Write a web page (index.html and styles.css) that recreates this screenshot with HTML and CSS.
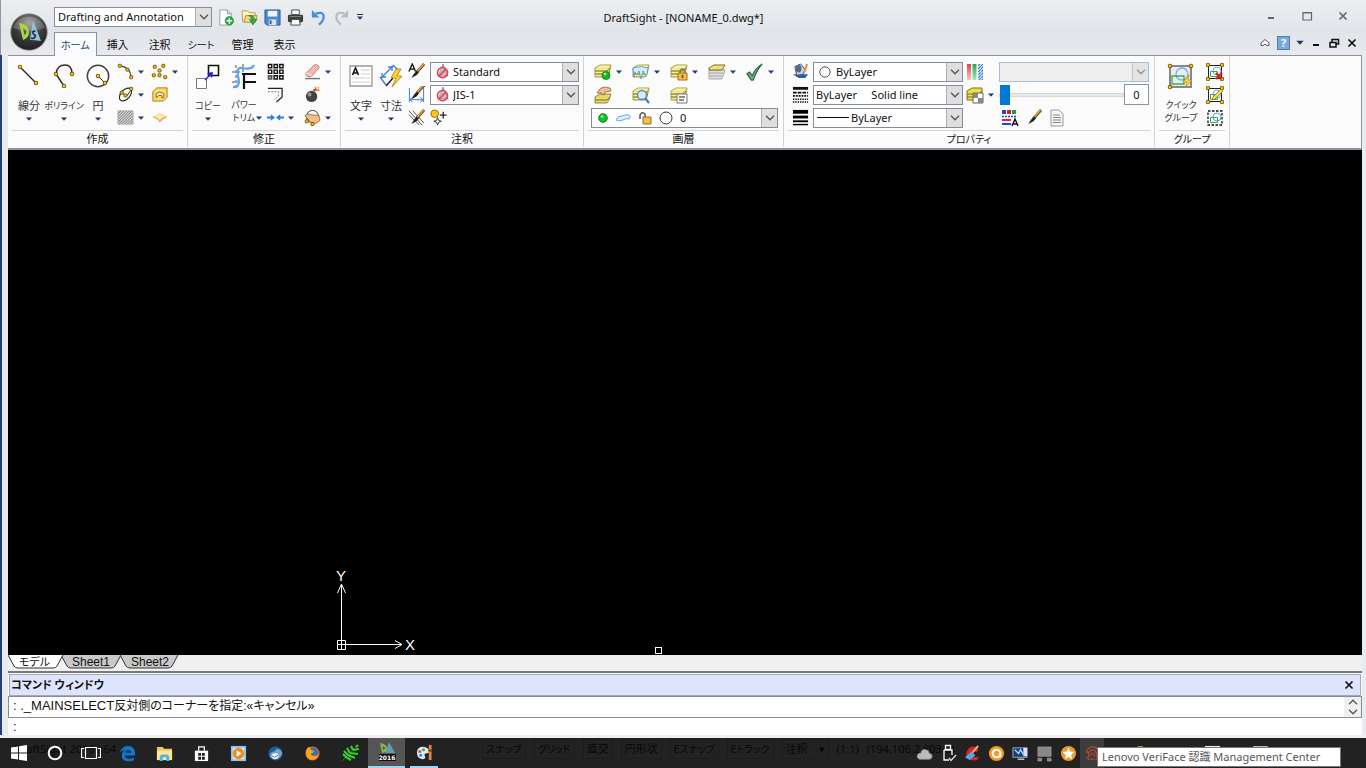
FILE: index.html
```html
<!DOCTYPE html>
<html lang="ja">
<head>
<meta charset="utf-8">
<title>DraftSight - [NONAME_0.dwg*]</title>
<link rel="stylesheet" href="styles.css">
</head>
<body>
<svg class="sprite" aria-hidden="true">
  <defs>
    <radialGradient id="gLogo" cx=".5" cy=".25" r=".8"><stop offset="0" stop-color="#8d8d8d"/><stop offset=".5" stop-color="#3c3c3c"/><stop offset="1" stop-color="#1c1c1c"/></radialGradient>
    <linearGradient id="gRed" x2="0" y2="1"><stop offset="0" stop-color="#e84040"/><stop offset="1" stop-color="#ffc9c0"/></linearGradient>
    <linearGradient id="gGreen" x2="0" y2="1"><stop offset="0" stop-color="#25a55a"/><stop offset="1" stop-color="#a8e6bd"/></linearGradient>
    <pattern id="hatch" width="3" height="3" patternUnits="userSpaceOnUse"><path d="M0 3L3 0M-1 1L1-1M2 4L4 2" stroke="#222" stroke-width=".8"/></pattern>
    <pattern id="hatchB" width="3" height="3" patternUnits="userSpaceOnUse"><rect width="3" height="3" fill="#d8e9fb"/><path d="M0 3L3 0" stroke="#3f7fcc" stroke-width="1.2"/></pattern>
    <g id="pt"><rect x="-1.6" y="-1.6" width="3.2" height="3.2" rx=".8" fill="#ffc800" stroke="#5d4300" stroke-width=".9"/></g>
    <g id="stack"><path d="M1 5l5-3h11l-2 9-2 3H1z" fill="#e3d964" stroke="#8a8440" stroke-width=".8"/><path d="M1.500 5.500L6 2.500h10.500l-3 3z" fill="#f8f2a0"/><path d="M1 8h12l3-3M1 11h12l3-3" fill="none" stroke="#77722c" stroke-width=".9"/><path d="M1.500 6.500h11.500M1.500 9.500h11.500M1.500 12.500h11.500" stroke="#faf6b4" stroke-width=".8"/></g>
    <g id="brush"><path d="M17 1L9 10" stroke="#6b4312" stroke-width="3"/><path d="M16.500 1L9 9.500" stroke="#e0a64e" stroke-width="1.600"/><path d="M9.500 8l-3 3-3 5 5.500-3 2.500-3z" fill="#222"/></g>
    <g id="noentry"><path d="M4 12L8.500 1 13 12z" fill="#9fc1e2" stroke="#6689ad" stroke-width=".8"/><circle cx="8" cy="9" r="4.800" fill="#f7c0c0" fill-opacity=".35" stroke="#e8434c" stroke-width="1.500"/><path d="M4.800 12.200l6.400-6.400" stroke="#e8434c" stroke-width="1.500"/></g>
  </defs>
  <symbol id="i-arrow" viewBox="0 0 6 4"><path d="M0 .5h6L3 3.800z" fill="#1f3d68"/></symbol>
  <symbol id="i-chev" viewBox="0 0 10 6"><path d="M1 .8l4 4 4-4" fill="none" stroke="#555" stroke-width="1.300"/></symbol>
  <symbol id="i-logo" viewBox="0 0 38 38"><circle cx="19" cy="19" r="18.300" fill="url(#gLogo)" stroke="#999" stroke-width=".8"/><path d="M3 15a16.500 15 0 0 1 32 0q-16 6-32 0z" fill="#fff" opacity=".2"/><path fill-rule="evenodd" d="M9 10q10 1 10 9 0 6-6 8zm4 5l1.500 7q2-1 2-3 0-3-3.500-4z" fill="#a8d63c"/><path d="M23 7l8 21q-7-1-11-1z" fill="#8fc4da"/><path d="M25.500 18q-4.500 0-2 3 3.500 2 .5 4-1.500 1-3 0" fill="none" stroke="#22343d" stroke-width="1.700"/></symbol>
  <symbol id="i-new" viewBox="0 0 18 18"><path d="M2 1h8l4 4v12H2z" fill="#fff" stroke="#9a9a9a"/><path d="M10 1v4h4" fill="#ddd" stroke="#9a9a9a"/><circle cx="12" cy="12.500" r="4.500" fill="#27a844" stroke="#128030" stroke-width=".6"/><path d="M12 9.500v6M9 12.500h6" stroke="#fff" stroke-width="1.500"/></symbol>
  <symbol id="i-open" viewBox="0 0 18 18"><path d="M2 14L1 2h6l2 2h6v4" fill="#fff1bb" stroke="#b99a4c"/><path d="M3 14l2-7h12l-2 7z" fill="#f5d88c" stroke="#b38c34"/><path d="M8 7q6-1 6 4h3l-4.500 6L9 11h2q0-3-3-4z" fill="#35aa40" stroke="#137422" stroke-width=".6"/></symbol>
  <symbol id="i-save" viewBox="0 0 18 18"><path d="M1 1h16v16H3l-2-2z" fill="#4b88ce" stroke="#2b5b9c"/><path d="M4 2h10v6H4z" fill="#eaf5ff"/><path d="M5 11h8v6H5z" fill="#d9e1ea"/><path d="M6 12h2v4H6z" fill="#315e9b"/></symbol>
  <symbol id="i-print" viewBox="0 0 18 18"><path d="M5 1h8v5H5z" fill="#fff" stroke="#444"/><rect x="1" y="6" width="16" height="8" rx="1.500" fill="#3c3c3c"/><path d="M3 8h12" stroke="#888"/><path d="M5 11h8l1 6H4z" fill="#fff" stroke="#444"/></symbol>
  <symbol id="i-undo" viewBox="0 0 18 18"><path d="M6 5q8-3 8.500 3 0 5-5 8.500" fill="none" stroke="#4a8be0" stroke-width="2.400"/><path d="M2 1v8h8z" fill="#4a8be0"/></symbol>
  <symbol id="i-redo" viewBox="0 0 18 18"><path d="M12 5q-8-3-8.500 3 0 5 5 8.500" fill="none" stroke="#b9bbbe" stroke-width="2.200"/><path d="M16 1v8H8z" fill="#b9bbbe"/></symbol>
  <symbol id="i-line" viewBox="0 0 28 28"><path d="M6 6l16 16" stroke="#222" stroke-width="1.300"/><use href="#pt" x="5" y="5"/><use href="#pt" x="21" y="21"/></symbol>
  <symbol id="i-poly" viewBox="0 0 28 28"><path d="M14 24L6 12q1-9 9-9 7 0 7 9" fill="none" stroke="#333" stroke-width="1.500"/><use href="#pt" x="6" y="12"/><use href="#pt" x="14" y="24"/><use href="#pt" x="22" y="12"/></symbol>
  <symbol id="i-circle" viewBox="0 0 28 28"><circle cx="14" cy="14" r="10.700" fill="#fff" stroke="#444" stroke-width="1.500"/><path d="M14 14l7 7" stroke="#222"/><use href="#pt" x="14" y="14"/><use href="#pt" x="21" y="21"/></symbol>
  <symbol id="i-arc" viewBox="0 0 18 18"><path d="M3 3q11 1 12 12" fill="none" stroke="#444" stroke-width="1.200"/><use href="#pt" x="3" y="3"/><use href="#pt" x="11" y="7"/><use href="#pt" x="15" y="15"/></symbol>
  <symbol id="i-pts" viewBox="0 0 18 18"><use href="#pt" x="4" y="4"/><use href="#pt" x="13" y="3"/><use href="#pt" x="9" y="8"/><use href="#pt" x="3" y="13"/><use href="#pt" x="9" y="13"/><use href="#pt" x="15" y="15"/></symbol>
  <symbol id="i-ell" viewBox="0 0 18 18"><ellipse cx="9" cy="9" rx="8" ry="4.800" transform="rotate(-48 9 9)" fill="#fff" stroke="#222" stroke-width="1.200"/><path d="M5 7l5 4 5-7" stroke="#222" fill="none"/><use href="#pt" x="5" y="7"/><use href="#pt" x="9" y="10"/><use href="#pt" x="15" y="3"/></symbol>
  <symbol id="i-region" viewBox="0 0 18 18"><path d="M6 2h11v10l-4 4H2V6z" fill="#ffd867" stroke="#a5781c"/><path d="M5.500 12.500V8q3-3 8 0v4.500h-2V10H8z" fill="#fff9d7" stroke="#86621a"/></symbol>
  <symbol id="i-hatch" viewBox="0 0 18 18"><path d="M1 2h16v14H1z" fill="#e8e8e8"/><path d="M1 2h16v14H1z" fill="url(#hatch)" stroke="#aaa"/></symbol>
  <symbol id="i-mask" viewBox="0 0 18 18"><path d="M2 9q5 0 7-4 3 3 8 4-4 1-8 5-2-4-7-5z" fill="#e0ac48"/><path d="M2 8q5 0 7-3 3 2 8 3-5 1-8 4-2-3-7-4z" fill="#ffebae" stroke="#ddb04d" stroke-width=".5"/></symbol>
  <symbol id="i-copy" viewBox="0 0 28 28"><path d="M14.500 3.500h10v10h-10z" fill="#fff" stroke="#111" stroke-width="1.600"/><path d="M2.500 16.500h10v10h-10z" fill="#fff" stroke="#777"/><path d="M11 18l5-5" stroke="#2020e8" stroke-width="1.400"/><path d="M19 10l-6 1 5 5z" fill="#2020e8"/></symbol>
  <symbol id="i-trim" viewBox="0 0 28 28"><path d="M2 10h10M2 20h10M13 2v9M6 3v23" stroke="#888" stroke-dasharray="3 2" stroke-width="1.500"/><path d="M14 27V12M12 12h14M14 20h12" fill="none" stroke="#111" stroke-width="2.200"/><path d="M3 25q8 1 5-11-2-9 4-8 10 2 12-3" fill="none" stroke="#5ba3ea" stroke-width="2.200"/></symbol>
  <symbol id="i-grid" viewBox="0 0 18 18"><g fill="#fff" stroke="#111" stroke-width="1.500"><path d="M1.500 1.500h3.500v3.500H1.500zM7.500 1.500H11v3.500H7.500zM13.500 1.500H17v3.500h-3.500zM1.500 7.500H5V11H1.500zM7.500 7.500H11V11H7.500zM13.500 7.500H17V11h-3.500zM7.500 13.500H11V17H7.500zM13.500 13.500H17V17h-3.500z"/><path d="M1.500 13.500H5V17H1.500z" fill="#999" stroke="#555"/></g></symbol>
  <symbol id="i-fillet" viewBox="0 0 18 18"><path d="M1 2.500h15v9L10 17" fill="none" stroke="#222" stroke-width="1.300"/><path d="M1 6h11v5l-5 4" fill="none" stroke="#777" stroke-dasharray="2 1.500"/></symbol>
  <symbol id="i-join" viewBox="0 0 18 18"><path d="M0 9h5M18 9h-5" stroke="#2b7de0" stroke-width="2"/><path d="M4 5.500L8.500 9 4 12.500zM14 5.500L9.500 9l4.500 3.500z" fill="#2b7de0"/></symbol>
  <symbol id="i-erase" viewBox="0 0 18 18"><path d="M1 16.500h16" stroke="#777" stroke-width="1.500"/><path d="M2 11L11 2q4-1 5 3l-8 9q-6 2-6-3z" fill="#f4b8b0" stroke="#b5776f"/><path d="M2 11q4-1 6 3" fill="none" stroke="#fff"/></symbol>
  <symbol id="i-bomb" viewBox="0 0 18 18"><circle cx="8" cy="11" r="6" fill="#424242"/><circle cx="6" cy="9" r="2" fill="#999"/><path d="M10 5l3-2" stroke="#555" stroke-width="2"/><path d="M12 0l1.500 2L16 1l-1 2 2 2-3 0-2 1z" fill="#ff5b22"/><circle cx="14" cy="3" r="1.200" fill="#ffe74a"/></symbol>
  <symbol id="i-edit" viewBox="0 0 18 18"><circle cx="9" cy="8" r="6.500" fill="none" stroke="#333"/><path d="M1 7q3-3 6-1l9 1 1 5-4 3H8l-3-3z" fill="#eebf87" stroke="#8b5929" stroke-width=".8"/><use href="#pt" x="3" y="13"/><use href="#pt" x="9" y="16"/></symbol>
  <symbol id="i-text" viewBox="0 0 28 28"><path d="M3 4h22v20H3z" fill="#fff" stroke="#999" stroke-width="1.300"/><path d="M14 8h9M14 12h9M5 16h18M5 20h18" stroke="#ccc"/><path d="M5.500 13l3-7 3 7M6.500 11h4" fill="none" stroke="#111" stroke-width="1.600"/></symbol>
  <symbol id="i-dim" viewBox="0 0 28 28"><path d="M4 16L16 4M3 15l6 8M16 3l6 6" stroke="#3b78dc" stroke-width="1.300"/><path d="M5 15v-4M5 15h4M15 5h-4M15 5v4" stroke="#3b78dc" stroke-width="1.300"/><path d="M9 24l7-8" stroke="#222" stroke-width="1.500"/><path d="M19 7l-5 9h5l-4 9 10-11h-5l4-7z" fill="#ffcf33" stroke="#aa7b0d" stroke-width=".8"/></symbol>
  <symbol id="i-tstyle" viewBox="0 0 18 18"><path d="M1 9l3.500-8L8 9M2.500 6.500h4" fill="none" stroke="#111" stroke-width="1.400"/><use href="#brush"/></symbol>
  <symbol id="i-dstyle" viewBox="0 0 18 18"><path d="M1.500 2v15M16.500 2v15M2 14.500h14M5 12l-3 2.500L5 17M13 12l3 2.500-3 2.500" fill="none" stroke="#3b78dc"/><use href="#brush" y="-2"/></symbol>
  <symbol id="i-cstyle" viewBox="0 0 18 18"><path d="M1 2l14 15M1 6l11 11M5 2l12 13" stroke="#333" stroke-width=".9"/><use href="#brush"/></symbol>
  <symbol id="i-center" viewBox="0 0 18 18"><circle cx="5" cy="5" r="4" fill="#ffc420" stroke="#9d6d00"/><path d="M14 3v7M10.500 6.500h7" stroke="#222" stroke-width="1.300"/><path d="M8 9l1 3 3 1-3 1-1 3-1-3-3-1 3-1z" fill="#fff" stroke="#333"/></symbol>
  <symbol id="i-noentry" viewBox="0 0 16 16"><use href="#noentry"/></symbol>
  <symbol id="i-lay1" viewBox="0 0 18 18"><use href="#stack"/><circle cx="12" cy="12.500" r="4" fill="#17b52a" stroke="#067815" stroke-width=".8"/><circle cx="11" cy="11" r="1.300" fill="#9dff9f"/></symbol>
  <symbol id="i-lay2" viewBox="0 0 18 18"><use href="#stack"/><path d="M1 5q8-3 15 0l-1 6q-1 5-2 0l-2-3-2 8-2-8-2 4-2-3-1 5z" fill="#d4edfc" stroke="#4b93c8" stroke-width=".8"/></symbol>
  <symbol id="i-lay3" viewBox="0 0 18 18"><use href="#stack"/><path d="M10 10V8q2.500-4 5 0v2" fill="none" stroke="#777" stroke-width="1.600"/><path d="M8 10h9v7H8z" fill="#f5bd43" stroke="#9e7312"/><path d="M12.500 12v3" stroke="#654300" stroke-width="1.500"/></symbol>
  <symbol id="i-lay4" viewBox="0 0 18 18"><path d="M1 7h16l-3 9H1z" fill="#dedede" stroke="#aaa"/><path d="M1 10h14M1 13h13" stroke="#aaa"/><path d="M1 5l5-3h11l-3 5H1z" fill="#eee27a" stroke="#77722c"/></symbol>
  <symbol id="i-check" viewBox="0 0 20 20"><path d="M1 12l3-2 3 4q3-8 11-13Q12 8 8 19H6z" fill="#63b77d" stroke="#2e5d3e" stroke-width="1.200"/></symbol>
  <symbol id="i-lay5" viewBox="0 0 18 18"><path d="M1 11l5-3h11l-2 6-2 3H1z" fill="#e3d964" stroke="#77722c" stroke-width=".8"/><path d="M1 14h12l3-3" fill="none" stroke="#77722c"/><path d="M3 7q3-6 7-6l6 1 1 3-6 1-1 3q-3-1-3-2z" fill="#edbd94" stroke="#975c35" stroke-width=".8"/></symbol>
  <symbol id="i-lay6" viewBox="0 0 18 18"><use href="#stack"/><circle cx="10" cy="9" r="4.500" fill="#d6ecff" stroke="#5488b8" stroke-width="1.300"/><path d="M13 12l4 5" stroke="#417eb9" stroke-width="2.200"/></symbol>
  <symbol id="i-lay7" viewBox="0 0 18 18"><use href="#stack"/><path d="M7 8h10v9H7z" fill="#fff" stroke="#777"/><path d="M9 11h6M9 14h5" stroke="#666" stroke-width="1.300"/></symbol>
  <symbol id="i-dot" viewBox="0 0 10 10"><circle cx="5" cy="5" r="4.300" fill="#13c425" stroke="#08851a"/><circle cx="4" cy="3.500" r="1.200" fill="#b3ffad"/></symbol>
  <symbol id="i-thaw" viewBox="0 0 16 10"><path d="M1 7q2-5 6-4 3-2 7-1 3 2 0 4-4-1-6 1-5 2-7 0z" fill="#d9effc" stroke="#69a8d8"/></symbol>
  <symbol id="i-unlock" viewBox="0 0 14 14"><path d="M2 8V4q2-4 5-1v4" fill="none" stroke="#555" stroke-width="1.500"/><path d="M5 6h8v7H5z" fill="#f0bf4e" stroke="#98731d"/></symbol>
  <symbol id="i-ring" viewBox="0 0 14 14"><circle cx="7" cy="7" r="6" fill="#fff" stroke="#333"/></symbol>
  <symbol id="i-paint" viewBox="0 0 18 18"><path d="M1 12h16l-3 4H7z" fill="#2361ae"/><path d="M3 4l6-3 5 6-2 5-7 1z" fill="#c9d3de" stroke="#3c4b5d"/><ellipse cx="7" cy="6" rx="3" ry="4" fill="#596a80"/><path d="M16 1l-3 9" stroke="#d78f3d" stroke-width="2"/></symbol>
  <symbol id="i-ltype" viewBox="0 0 18 18"><path d="M1 2.500h16" stroke="#111" stroke-width="3"/><path d="M1 7h16" stroke="#111" stroke-width="2" stroke-dasharray="4 1"/><path d="M1 10.500h16" stroke="#111" stroke-width="2" stroke-dasharray="2 1"/><path d="M1 14h16M1 17h16" stroke="#111" stroke-width="1.500" stroke-dasharray="1.500 1"/></symbol>
  <symbol id="i-lweight" viewBox="0 0 18 18"><path d="M1 3h16" stroke="#000" stroke-width="4"/><path d="M1 8.500h16" stroke="#000" stroke-width="3"/><path d="M1 13h16" stroke="#000" stroke-width="2"/><path d="M1 16.500h16" stroke="#000" stroke-width="1.500"/></symbol>
  <symbol id="i-bars" viewBox="0 0 18 18"><path d="M1 1h4v16H1z" fill="url(#gRed)"/><path d="M6.500 1h4v16h-4z" fill="url(#gGreen)"/><path d="M12 1h5v16h-5z" fill="url(#hatchB)"/></symbol>
  <symbol id="i-trans" viewBox="0 0 18 18"><path d="M1 5l5-3h10v10l-3 2H1z" fill="#f4dd3c" stroke="#77722c"/><path d="M1 8h12l3-3M1 11h10" fill="none" stroke="#77722c"/><path d="M7 7h10v10H7z" fill="#fff" stroke="#666"/><path d="M7 7h5v5H7zM12 12h5v5h-5z" fill="#888"/></symbol>
  <symbol id="i-props" viewBox="0 0 18 18"><path d="M1 1h4v4H1z" fill="#2345d0"/><path d="M6 1h4v4H6z" fill="#cc2030"/><path d="M11 1h4v4h-4z" fill="#2c9747"/><path d="M1 7.500h14" stroke="#2345d0" stroke-width="1.500" stroke-dasharray="2 1"/><path d="M1 11h9" stroke="#dd2838" stroke-width="2"/><path d="M1 15h9" stroke="#2345d0" stroke-width="2"/><path d="M11 17l3-7 3 7M12 15h4" fill="none" stroke="#111" stroke-width="1.400"/></symbol>
  <symbol id="i-brush" viewBox="0 0 18 18"><use href="#brush"/></symbol>
  <symbol id="i-doc" viewBox="0 0 18 18"><path d="M3 1h8l4 4v12H3z" fill="#f5f5f5" stroke="#999"/><path d="M5 6h7M5 8.500h8M5 11h8M5 13.500h8" stroke="#888"/></symbol>
  <symbol id="i-qgroup" viewBox="0 0 28 28"><path d="M3 4h21v21H3z" fill="#ececec" stroke="#888" stroke-width="2"/><circle cx="15" cy="12" r="6" fill="none" stroke="#79abe8" stroke-width="1.300"/><path d="M5 14h12v8H5z" fill="none" stroke="#35ae54" stroke-width="1.300"/><use href="#pt" x="3" y="4"/><use href="#pt" x="24" y="4"/><use href="#pt" x="3" y="25"/><path d="M22 13l-6 7h4l-2 6 7-8h-4z" fill="#ffd23e" stroke="#a87c12" stroke-width=".6"/></symbol>
  <symbol id="i-grp" viewBox="0 0 18 18"><path d="M2.500 2.500h13v13h-13z" fill="none" stroke="#222"/><circle cx="11" cy="8" r="4" fill="none" stroke="#79abe8"/><path d="M4.500 8.500h7v5h-7z" fill="none" stroke="#35ae54"/><use href="#pt" x="2" y="2"/><use href="#pt" x="16" y="2"/><use href="#pt" x="2" y="16"/><use href="#pt" x="16" y="16"/></symbol>
  <symbol id="i-grpx" viewBox="0 0 18 18"><use href="#i-grp" width="18" height="18"/><path d="M10 10l6 6M16 10l-6 6" stroke="#dc1c24" stroke-width="2.200"/></symbol>
  <symbol id="i-grpe" viewBox="0 0 18 18"><use href="#i-grp" width="18" height="18"/><path d="M17 5l-8 8-3 1 1-3 8-8z" fill="#ffd84b" stroke="#9d7415" stroke-width=".8"/></symbol>
  <symbol id="i-grps" viewBox="0 0 18 18"><path d="M2 2h14v14H2z" fill="none" stroke="#111" stroke-width="1.300" stroke-dasharray="2.500 1.500"/><circle cx="11" cy="8" r="4" fill="none" stroke="#5d9be5"/><path d="M4.500 8.500h7v5h-7z" fill="none" stroke="#35ae54"/></symbol>
  <symbol id="i-min" viewBox="0 0 12 12"><path d="M3 8h6" stroke="currentColor" stroke-width="2"/></symbol>
  <symbol id="i-max" viewBox="0 0 12 12"><path d="M2 2.500h8.500v7.500H2zM2 3h8" fill="none" stroke="currentColor" stroke-width="1.200"/></symbol>
  <symbol id="i-x" viewBox="0 0 12 12"><path d="M2.500 2.500l7 7M9.500 2.500l-7 7" stroke="currentColor" stroke-width="1.700"/></symbol>
  <symbol id="i-restore" viewBox="0 0 12 12"><path d="M4 5V2.500h6.500V7H8M2 5.500h6V10H2zM4 2.500h6.500M2 5.500h6" fill="none" stroke="currentColor" stroke-width="1.500"/></symbol>
  <symbol id="i-up" viewBox="0 0 12 12"><path d="M2 6l4-3.500L10 6v2.500H8L6 7 4 8.500H2z" fill="#fff" stroke="#555"/></symbol>
  <symbol id="t-win" viewBox="0 0 18 18"><path d="M1 3.500l7-1v6H1zM9 2.300L17 1v7.500H9zM1 9.500h7v6l-7-1zM9 9.500h8V17l-8-1.200z" fill="#fff"/></symbol>
  <symbol id="t-cort" viewBox="0 0 18 18"><circle cx="9" cy="9" r="6.300" fill="none" stroke="#fff" stroke-width="2"/></symbol>
  <symbol id="t-view" viewBox="0 0 20 18"><path d="M4.500 3.500h11v11h-11zM3 4.500H.5v9H3M17 4.500h2.500v9H17" fill="none" stroke="#fff" stroke-width="1.200"/></symbol>
  <symbol id="t-edge" viewBox="0 0 18 18"><path d="M1 8Q3 1 9.500 1 17 1.500 17 8.500V11H6.500q0 3.500 4.500 3.500 3 0 5-1.300V16q-3 1.500-6.500 1.200Q3 17 3 11q0-4 4-6Q3 5.500 1 8zm5.700.2h6q0-3-3-3-2.500 0-3 3z" fill="#0d78d8"/></symbol>
  <symbol id="t-fold" viewBox="0 0 18 18"><path d="M1 2h6l1.500 2H17v12H1z" fill="#f2c65a"/><path d="M1 6h16v10H1z" fill="#ffe696"/><path d="M4 17v-5l2-2h6l2 2v5h-3v-4H7v4z" fill="#4ab3ea"/></symbol>
  <symbol id="t-store" viewBox="0 0 18 18"><path d="M2 6h14v11H2z" fill="#fff"/><path d="M6 6V2h6v4" fill="none" stroke="#fff" stroke-width="1.300"/><path d="M5.500 8.500h3v3h-3zM9.500 8.500h3v3h-3zM5.500 12.500h3v3h-3zM9.500 12.500h3v3h-3z" fill="#222"/></symbol>
  <symbol id="t-media" viewBox="0 0 18 18"><path d="M1 1h16v16H1z" fill="#8fc5ec"/><path d="M3 3h12v12H3z" fill="#d9efff"/><circle cx="9" cy="9" r="6" fill="#f28a17"/><path d="M7 5.500l5.500 3.500L7 12.500z" fill="#fff"/></symbol>
  <symbol id="t-bird" viewBox="0 0 18 18"><circle cx="9" cy="9" r="7.500" fill="#1e5b9d"/><path d="M3 12q0-5 5-5l2-3q4 0 6 4-1 7-7 7-4 0-6-3z" fill="#6fa5d4"/><path d="M4 11q4-4 9-1-1 5-5 5-3-1-4-4z" fill="#fff"/><path d="M4 11l4 2 5-3" stroke="#566" fill="none"/></symbol>
  <symbol id="t-fox" viewBox="0 0 18 18"><circle cx="9" cy="9" r="7.500" fill="#e9661b"/><circle cx="10" cy="8" r="5" fill="#3472b8"/><path d="M2 7q1-5 4-5 0 3 4 4 1 2-3 3 2 5 8 1-2 6-7 6-6-1-6-9z" fill="#f7a51c"/></symbol>
  <symbol id="t-leaf" viewBox="0 0 18 18"><path d="M1 17L16 2" stroke="#1b7818"/><path d="M5 13l-3-3M7 11L3 7M9 9L6 4M12 6l-2-4M5 13l5 3M7 11l7 3M9 9l8 1M12 6l6-1M15 3l2-2" stroke="#35d02b" stroke-width="2.200"/></symbol>
  <symbol id="t-ds" viewBox="0 0 22 22"><path fill-rule="evenodd" d="M4 2q7 1 7 6 0 3-5 4zm2.500 3l.5 4q2-1 2-2 0-1-2.500-2z" fill="#87b94b"/><path d="M13 1l6 11H9z" fill="#659db0"/><path d="M3 13h17v7H3z" fill="#111"/></symbol>
  <symbol id="t-pal" viewBox="0 0 18 18"><path d="M1 9q0-6 7-6 6 1 6 5 0 2-4 2-2 1 0 4-1 3-4 2-5-1-5-7z" fill="#dceaf4"/><circle cx="4" cy="8" r="1.600" fill="#e54d3c"/><circle cx="8" cy="6" r="1.600" fill="#42ad48"/><circle cx="5" cy="12" r="1.600" fill="#3c86dd"/><path d="M15 1v16" stroke="#dc873a" stroke-width="3"/><path d="M13 7h4" stroke="#6a3914" stroke-width="2"/></symbol>
  <symbol id="t-cloud" viewBox="0 0 18 18"><path d="M4 15q-4-1-2-5 1-2 3-1 1-5 5-4 4 0 4 4 3 0 3 3 0 3-3 3z" fill="#bbb" stroke="#8b8b8b"/></symbol>
  <symbol id="t-usb" viewBox="0 0 18 18"><path d="M6.500 1.500h5v4h-5zM5 6h8v5M5 6v10h5" fill="none" stroke="#fff" stroke-width="1.300"/><path d="M10 14l2 2.500L17 11" fill="none" stroke="#ddd" stroke-width="1.300"/></symbol>
  <symbol id="t-cc" viewBox="0 0 18 18"><path d="M15 4q-4-4-9-1-5 4-3 9 3 6 11 4l2-4q-4 2-6 0-2-2 0-4 2-2 4 0z" fill="#d62921"/><path d="M15 1L9 8" stroke="#e0b27a" stroke-width="2"/><path d="M8 7l4 4-6 5-5-3z" fill="#5aa6e0"/></symbol>
  <symbol id="t-avast" viewBox="0 0 18 18"><circle cx="9" cy="9" r="8" fill="#f59a1e"/><circle cx="9" cy="9" r="4" fill="none" stroke="#fff" stroke-width="2.200"/><path d="M13 7v6" stroke="#fff" stroke-width="2"/></symbol>
  <symbol id="t-mon" viewBox="0 0 18 18"><path d="M1 3h15v10H1z" fill="#173c7c" stroke="#aaa"/><path d="M3 5l4 4 2-4 3 5" stroke="#9cdcff" fill="none" stroke-width="1.500"/><path d="M12 3h4v9h-4z" fill="#cfe4f6"/><path d="M6 15h7" stroke="#ccc" stroke-width="1.500"/></symbol>
  <symbol id="t-sq" viewBox="0 0 18 18"><path d="M2 2h14v10H2zM2 14h4v3H2zM12 14h4v3h-4z" fill="#888" stroke="#aaa" stroke-width=".6"/></symbol>
  <symbol id="t-star" viewBox="0 0 18 18"><circle cx="9" cy="9" r="8" fill="#f39a2c"/><path d="M9 3l1.800 4 4.200.5-3.100 3 .8 4.300L9 12.700l-3.700 2.100.8-4.300-3.100-3 4.200-.5z" fill="#fff"/></symbol>
  <symbol id="t-face" viewBox="0 0 18 18"><path d="M3 9q0-7 6-7t6 7M5 13V8q4-6 8 0v5M8 8l-1 4M10 8l1 4M3 13l3 3M15 13l-3 3M7 15h4" fill="none" stroke="#b8482a" stroke-width="1.300"/></symbol>
  <symbol id="t-balls" viewBox="0 0 18 18"><circle cx="9" cy="7" r="6" fill="#e8d235"/><path d="M3 7q0-6 6-6v6z" fill="#4fa848"/></symbol>
  <symbol id="t-key" viewBox="0 0 18 18"><path d="M1 1h16v6H1z" fill="#eee"/></symbol>
  <symbol id="t-note" viewBox="0 0 18 18"><path d="M2 6V2h14v4" fill="none" stroke="#eee" stroke-width="1.500"/></symbol>
</svg>

<div class="app">
  <header class="head">
    <button class="logo" aria-label="DraftSight"><svg width="38" height="38"><use href="#i-logo"/></svg></button>
    <div class="quick">
      <div class="combo workspace"><select aria-label="ワークスペース"><option>Drafting and Annotation</option></select><span class="drop"><svg class="chev"><use href="#i-chev"/></svg></span></div>
      <button aria-label="新規"><svg class="i16"><use href="#i-new"/></svg></button>
      <button aria-label="開く"><svg class="i16"><use href="#i-open"/></svg></button>
      <button aria-label="保存"><svg class="i16"><use href="#i-save"/></svg></button>
      <button aria-label="印刷"><svg class="i16"><use href="#i-print"/></svg></button>
      <button aria-label="元に戻す"><svg class="i16"><use href="#i-undo"/></svg></button>
      <button aria-label="やり直し"><svg class="i16"><use href="#i-redo"/></svg></button>
      <button class="more" aria-label="カスタマイズ"><svg class="arr"><use href="#i-arrow"/></svg></button>
    </div>
    <h1 class="title">DraftSight - [NONAME_0.dwg*]</h1>
    <div class="winctl">
      <button aria-label="最小化"><svg class="i12"><use href="#i-min"/></svg></button>
      <button aria-label="最大化"><svg class="i12"><use href="#i-max"/></svg></button>
      <button aria-label="閉じる"><svg class="i12"><use href="#i-x"/></svg></button>
    </div>
    <nav class="tabs">
      <button class="tab kana on">ホーム</button><button class="tab">挿入</button><button class="tab">注釈</button><button class="tab kana">シート</button><button class="tab">管理</button><button class="tab">表示</button>
    </nav>
    <div class="docctl">
      <button aria-label="リボンを最小化"><svg class="i12"><use href="#i-up"/></svg></button>
      <button class="help" aria-label="ヘルプ">?</button>
      <button class="helparr" aria-label="ヘルプ メニュー"><svg class="arr big"><use href="#i-arrow"/></svg></button>
      <button aria-label="図面を最小化"><svg class="i12"><use href="#i-min"/></svg></button>
      <button aria-label="図面を元に戻す"><svg class="i12"><use href="#i-restore"/></svg></button>
      <button aria-label="図面を閉じる"><svg class="i12"><use href="#i-x"/></svg></button>
    </div>
  </header>

  <main class="frame">
    <div class="ribbon">
      <section class="group g1">
        <div class="tools">
          <button class="large"><svg class="i28"><use href="#i-line"/></svg><span>線分</span><svg class="arr"><use href="#i-arrow"/></svg></button>
          <button class="large"><svg class="i28"><use href="#i-poly"/></svg><span class="tight">ポリライン</span><svg class="arr"><use href="#i-arrow"/></svg></button>
          <button class="large"><svg class="i28"><use href="#i-circle"/></svg><span>円</span><svg class="arr"><use href="#i-arrow"/></svg></button>
          <div class="stack">
            <button class="small" aria-label="円弧"><svg class="i16"><use href="#i-arc"/></svg><svg class="arr"><use href="#i-arrow"/></svg></button>
            <button class="small" aria-label="楕円"><svg class="i16"><use href="#i-ell"/></svg><svg class="arr"><use href="#i-arrow"/></svg></button>
            <button class="small" aria-label="ハッチング"><svg class="i16"><use href="#i-hatch"/></svg><svg class="arr"><use href="#i-arrow"/></svg></button>
          </div>
          <div class="stack">
            <button class="small" aria-label="点"><svg class="i16"><use href="#i-pts"/></svg><svg class="arr"><use href="#i-arrow"/></svg></button>
            <button class="small" aria-label="領域"><svg class="i16"><use href="#i-region"/></svg></button>
            <button class="small" aria-label="マスク"><svg class="i16"><use href="#i-mask"/></svg></button>
          </div>
        </div>
        <h2>作成</h2>
      </section>
      <section class="group g2">
        <div class="tools">
          <button class="large"><svg class="i28"><use href="#i-copy"/></svg><span class="tight">コピー</span><svg class="arr"><use href="#i-arrow"/></svg></button>
          <button class="large two"><svg class="i28"><use href="#i-trim"/></svg><span class="tight">パワー<br>トリム</span><svg class="arr"><use href="#i-arrow"/></svg></button>
          <div class="stack">
            <button class="small" aria-label="パターン"><svg class="i16"><use href="#i-grid"/></svg></button>
            <button class="small" aria-label="フィレット"><svg class="i16"><use href="#i-fillet"/></svg></button>
            <button class="small" aria-label="結合"><svg class="i16"><use href="#i-join"/></svg><svg class="arr"><use href="#i-arrow"/></svg></button>
          </div>
          <div class="stack">
            <button class="small" aria-label="削除"><svg class="i16"><use href="#i-erase"/></svg><svg class="arr"><use href="#i-arrow"/></svg></button>
            <button class="small" aria-label="分解"><svg class="i16"><use href="#i-bomb"/></svg></button>
            <button class="small" aria-label="編集"><svg class="i16"><use href="#i-edit"/></svg><svg class="arr"><use href="#i-arrow"/></svg></button>
          </div>
        </div>
        <h2>修正</h2>
      </section>
      <section class="group g3">
        <div class="tools">
          <button class="large"><svg class="i28"><use href="#i-text"/></svg><span>文字</span><svg class="arr"><use href="#i-arrow"/></svg></button>
          <button class="large"><svg class="i28"><use href="#i-dim"/></svg><span>寸法</span><svg class="arr"><use href="#i-arrow"/></svg></button>
          <div class="stack">
            <button class="small" aria-label="文字スタイル"><svg class="i16"><use href="#i-tstyle"/></svg></button>
            <button class="small" aria-label="寸法スタイル"><svg class="i16"><use href="#i-dstyle"/></svg></button>
            <button class="small" aria-label="表スタイル"><svg class="i16"><use href="#i-cstyle"/></svg></button>
          </div>
          <div class="stack">
            <div class="combo"><svg class="i16"><use href="#i-noentry"/></svg><select aria-label="文字スタイル"><option>Standard</option></select><span class="drop"><svg class="chev"><use href="#i-chev"/></svg></span></div>
            <div class="combo"><svg class="i16"><use href="#i-noentry"/></svg><select aria-label="寸法スタイル"><option>JIS-1</option></select><span class="drop"><svg class="chev"><use href="#i-chev"/></svg></span></div>
            <button class="small flush" aria-label="中心マーク"><svg class="i16"><use href="#i-center"/></svg></button>
          </div>
        </div>
        <h2>注釈</h2>
      </section>
      <section class="group g4">
        <div class="tools">
          <div class="stack">
            <div class="row pitch">
              <button class="small" aria-label="画層表示"><svg class="i18"><use href="#i-lay1"/></svg><svg class="arr"><use href="#i-arrow"/></svg></button>
              <button class="small" aria-label="画層フリーズ"><svg class="i18"><use href="#i-lay2"/></svg><svg class="arr"><use href="#i-arrow"/></svg></button>
              <button class="small" aria-label="画層ロック"><svg class="i18"><use href="#i-lay3"/></svg><svg class="arr"><use href="#i-arrow"/></svg></button>
              <button class="small" aria-label="画層分離"><svg class="i18"><use href="#i-lay4"/></svg><svg class="arr"><use href="#i-arrow"/></svg></button>
              <button class="small" aria-label="画層適用"><svg class="i18"><use href="#i-check"/></svg><svg class="arr"><use href="#i-arrow"/></svg></button>
            </div>
            <div class="row pitch">
              <button class="small" aria-label="画層をアクティブ化"><svg class="i18"><use href="#i-lay5"/></svg></button>
              <button class="small" aria-label="画層プレビュー"><svg class="i18"><use href="#i-lay6"/></svg></button>
              <button class="small" aria-label="画層ステータス"><svg class="i18"><use href="#i-lay7"/></svg></button>
            </div>
            <div class="combo layer"><svg class="i10"><use href="#i-dot"/></svg><svg class="thaw"><use href="#i-thaw"/></svg><svg class="i14"><use href="#i-unlock"/></svg><svg class="i14"><use href="#i-ring"/></svg><select aria-label="画層"><option>0</option></select><span class="drop"><svg class="chev"><use href="#i-chev"/></svg></span></div>
          </div>
        </div>
        <h2>画層</h2>
      </section>
      <section class="group g5">
        <div class="tools">
          <div class="stack">
            <button class="small" aria-label="線色"><svg class="i16"><use href="#i-paint"/></svg></button>
            <button class="small" aria-label="線種"><svg class="i16"><use href="#i-ltype"/></svg></button>
            <button class="small" aria-label="線幅"><svg class="i16"><use href="#i-lweight"/></svg></button>
          </div>
          <div class="stack">
            <div class="combo color"><svg class="i12"><use href="#i-ring"/></svg><select aria-label="線色"><option>ByLayer</option></select><span class="drop"><svg class="chev"><use href="#i-chev"/></svg></span></div>
            <div class="combo bare"><select aria-label="線種"><option>ByLayer &nbsp; &nbsp; Solid line</option></select><span class="drop"><svg class="chev"><use href="#i-chev"/></svg></span></div>
            <div class="combo weight"><span class="rule"></span><select aria-label="線幅"><option>ByLayer</option></select><span class="drop"><svg class="chev"><use href="#i-chev"/></svg></span></div>
          </div>
          <div class="stack">
            <button class="small" aria-label="印刷スタイル"><svg class="i18"><use href="#i-bars"/></svg></button>
            <button class="small" aria-label="透過性"><svg class="i18"><use href="#i-trans"/></svg><svg class="arr"><use href="#i-arrow"/></svg></button>
          </div>
          <div class="stack">
            <div class="combo off"><select aria-label="印刷スタイル" disabled><option></option></select><span class="drop"><svg class="chev"><use href="#i-chev"/></svg></span></div>
            <div class="row slide"><input type="range" min="0" max="90" value="0" aria-label="透過性"><input class="num" type="text" value="0" aria-label="透過性の値"></div>
            <div class="row props">
              <button class="small flush" aria-label="プロパティ"><svg class="i18"><use href="#i-props"/></svg></button>
              <button class="small flush" aria-label="プロパティ ペインタ"><svg class="i16"><use href="#i-brush"/></svg></button>
              <button class="small flush" aria-label="リスト"><svg class="i18"><use href="#i-doc"/></svg></button>
            </div>
          </div>
        </div>
        <h2 class="tight">プロパティ</h2>
      </section>
      <section class="group g6">
        <div class="tools">
          <button class="large two"><svg class="i28"><use href="#i-qgroup"/></svg><span class="tight">クイック<br>グループ</span></button>
          <div class="stack">
            <button class="small" aria-label="グループ解除"><svg class="i18"><use href="#i-grpx"/></svg></button>
            <button class="small" aria-label="グループ編集"><svg class="i18"><use href="#i-grpe"/></svg></button>
            <button class="small" aria-label="グループ選択"><svg class="i18"><use href="#i-grps"/></svg></button>
          </div>
        </div>
        <h2 class="tight">グループ</h2>
      </section>
    </div>

    <div class="canvas">
      <svg class="ucs" width="100" height="90" fill="none" stroke="#fff">
        <path d="M16.500 75.500v-55M12.500 28l4-9 4 9M16.500 79.500h60M70 75.500l7 4-7 4M12.500 75.500h8v9h-8zM16.500 75.500v9M12.500 79.500h4"/>
        <text x="11" y="16" fill="#fff" stroke="none">Y</text><text x="80" y="85" fill="#fff" stroke="none">X</text>
      </svg>
      <span class="pick"></span>
    </div>

    <div class="sheets">
      <button class="sheet on"><svg viewBox="0 0 62 14"><path d="M0 0l6 11q1 2 4 2h35q3 0 4-2l6-11"/></svg><span class="tight">モデル</span></button>
      <button class="sheet"><svg viewBox="0 0 62 14"><path d="M0 0l6 11q1 2 4 2h40q3 0 4-2l6-11"/></svg><span>Sheet1</span></button>
      <button class="sheet"><svg viewBox="0 0 62 14"><path d="M0 0l6 11q1 2 4 2h38q3 0 4-2l6-11"/></svg><span>Sheet2</span></button>
    </div>

    <section class="cmd">
      <div class="cmdhead"><h2 class="tight">コマンド ウィンドウ</h2><button aria-label="閉じる"><svg class="i12"><use href="#i-x"/></svg></button></div>
      <div class="log"><p>: ._MAINSELECT<span>反対側のコーナーを指定:«キャンセル»</span></p><div class="scroll"><svg class="chev flip"><use href="#i-chev"/></svg><svg class="chev"><use href="#i-chev"/></svg></div></div>
      <label class="prompt"><span>:</span><input type="text" aria-label="コマンド"></label>
    </section>
  </main>

  <footer class="bottom">
    <div class="status">
      <span class="ver">DraftSight 2016 x64</span>
      <button class="tight">スナップ</button><button class="tight">グリッド</button><button>直交</button><button>円形状</button><button class="tight">Eスナップ</button><button class="tight">Eトラック</button><button>注釈　▾</button><span>(1:1)</span><span>(194.106,2.803,0)</span>
    </div>
    <div class="taskbar">
      <button aria-label="スタート"><svg class="i18"><use href="#t-win"/></svg></button>
      <button aria-label="Cortana"><svg class="i18"><use href="#t-cort"/></svg></button>
      <button aria-label="タスク ビュー"><svg class="i20"><use href="#t-view"/></svg></button>
      <button class="app-btn" aria-label="Edge"><svg class="i16"><use href="#t-edge"/></svg></button>
      <button class="app-btn" aria-label="エクスプローラー"><svg class="i16"><use href="#t-fold"/></svg></button>
      <button class="app-btn" aria-label="ストア"><svg class="i16"><use href="#t-store"/></svg></button>
      <button class="app-btn" aria-label="Media Player"><svg class="i16"><use href="#t-media"/></svg></button>
      <button class="app-btn" aria-label="Thunderbird"><svg class="i16"><use href="#t-bird"/></svg></button>
      <button class="app-btn" aria-label="Firefox"><svg class="i16"><use href="#t-fox"/></svg></button>
      <button class="app-btn" aria-label="リーフ"><svg class="i18"><use href="#t-leaf"/></svg></button>
      <button class="app-btn live" aria-label="DraftSight 2016"><svg class="dsicon" viewBox="0 0 22 22"><use href="#t-ds" width="22" height="22"/><text x="11" y="19" text-anchor="middle">2016</text></svg></button>
      <button class="app-btn run" aria-label="ペイント"><svg class="i16"><use href="#t-pal"/></svg></button>
      <div class="tray">
        <button aria-label="OneDrive"><svg class="i16"><use href="#t-cloud"/></svg></button>
        <button aria-label="USB"><svg class="i18"><use href="#t-usb"/></svg></button>
        <button aria-label="CCleaner"><svg class="i16"><use href="#t-cc"/></svg></button>
        <button aria-label="Avast"><svg class="i16"><use href="#t-avast"/></svg></button>
        <button aria-label="モニター"><svg class="i16"><use href="#t-mon"/></svg></button>
        <button aria-label="タッチパッド"><svg class="i16"><use href="#t-sq"/></svg></button>
        <button aria-label="スター"><svg class="i16"><use href="#t-star"/></svg></button>
        <button class="hover" aria-label="VeriFace"><svg class="i16"><use href="#t-face"/></svg></button>
        <span></span>
        <button aria-label="IME"><svg class="i16"><use href="#t-balls"/></svg></button>
        <span></span><span></span>
        <button aria-label="キーボード"><svg class="i16"><use href="#t-key"/></svg></button>
        <span></span>
        <button aria-label="通知"><svg class="i16"><use href="#t-note"/></svg></button>
      </div>
    </div>
    <div class="tip" role="tooltip">Lenovo VeriFace 認識 Management Center</div>
  </footer>
</div>
</body>
</html>
```
FILE: styles.css
```css
* { box-sizing: border-box; }
html, body { height: 100%; }
body {
  margin: 0;
  overflow: hidden;
  font: 12px/16px "Noto Sans", "Noto Sans CJK JP", sans-serif;
  color: #111;
}
.sprite { position: absolute; width: 0; height: 0; }
svg { display: block; flex: none; }
button, select, input { font: inherit; color: inherit; margin: 0; }
button { border: 0; padding: 0; background: none; display: flex; align-items: center; justify-content: center; }
h1, h2, p { margin: 0; font: inherit; }
.tight { font-feature-settings: "palt"; }
.i10 { width: 10px; height: 10px; }
.i12 { width: 12px; height: 12px; }
.i14 { width: 14px; height: 14px; }
.i16 { width: 17px; height: 17px; }
.i18 { width: 18px; height: 18px; }
.i20 { width: 20px; height: 20px; }
.i28 { width: 28px; height: 28px; }
.arr { width: 6px; height: 4px; }
.arr.big { width: 8px; height: 5px; }
.chev { width: 10px; height: 6px; }
.flip { transform: rotate(180deg); }
.thaw { width: 16px; height: 10px; }

.app { display: flex; flex-direction: column; height: 100%; background: #e6e8ec; }

/* title bar and ribbon tabs */
.head {
  display: grid;
  grid-template: 32px 23px / 1fr auto 1fr;
  background: linear-gradient(#eceef1, #e1e4e9 60%, #e8eaed);
  border-left: 1px solid #8f97a5;
  font-size: 11px;
}
.logo { grid-area: 1 / 1 / 3 / 2; justify-self: start; padding: 8px 0 0 9px; z-index: 1; }
.quick { grid-area: 1 / 1; display: flex; align-items: center; gap: 6px; padding: 2px 0 0 53px; }
.title { grid-area: 1 / 2; line-height: 36px; white-space: nowrap; }
.winctl { grid-area: 1 / 3; display: flex; justify-content: flex-end; gap: 24px; padding-right: 17px; color: #666; }
.tabs { grid-area: 2 / 1 / 3 / 3; display: flex; padding-left: 53px; z-index: 1; }
.tab { padding: 0 9px; height: 24px; border: 1px solid transparent; border-bottom: 0; }
.tab.kana { padding: 0 6px; font-size: 10px; font-feature-settings: "palt"; }
.tab.on { background: #fafbfc; border-color: #8b93a0; color: #1b3f7d; }
.docctl { grid-area: 2 / 3; display: flex; justify-content: flex-end; align-items: center; gap: 6px; padding: 0 8px 2px 0; }
.help { width: 13px; height: 14px; border: 1px solid #4b7cb3; background: #79a8dc; color: #fff; font-weight: bold; }
.helparr { width: 8px; }
.more { margin-left: 1px; border-top: 1px solid #333; padding-top: 1px; }

.combo {
  display: flex; align-items: center; height: 20px; padding-left: 3px;
  background: #fff; border: 1px solid #878c99;
}
.combo select {
  flex: 1; min-width: 0; height: 18px; padding: 0 0 0 2px; border: 0; outline: 0;
  background: none; appearance: none; font-size: 11px; line-height: 18px; opacity: 1;
}
.drop {
  width: 16px; height: 18px; display: flex; align-items: center; justify-content: center;
  background: #dfdfdf; border: 1px solid #adadad; border-width: 0 0 0 1px; pointer-events: none;
}
.combo > svg { margin-right: 0; }
.workspace { width: 158px; padding-left: 1px; }
.bare { padding-left: 0; }

/* work area */
.frame {
  flex: 1; min-height: 0; display: flex; flex-direction: column;
  padding: 0 4px 0 6px; border-left: 2px solid #24407c; background: #e9ebee;
}
.ribbon {
  display: flex; padding: 0 0 1px; background: #fbfbfb;
  border: 1px solid #8b93a0; border-bottom-width: 2px; border-left: 0;
}
.group { display: flex; flex-direction: column; flex: none; border-right: 1px solid #d2d2d2; }
.tools { display: grid; height: 74px; padding: 4px 0 0 4px; }
.group h2 { margin: 0 4px; height: 17px; border-top: 1px solid #d2d2d2; text-align: center; line-height: 16px; font-size: 11px; }
.group h2.tight { font-size: 10px; }
.g1 .tools { grid-template-columns: 34px 36px 32px 34px 39px; }
.g2 .tools { grid-template-columns: 32px 40px 37px 39px; }
.g3 .tools { grid-template-columns: 32px 28px 25px 149px; padding-right: 4px; }
.g4 .tools { grid-template-columns: 187px; padding: 4px 5px 0 7px; }
.g5 .tools { grid-template-columns: 24px 150px 36px 150px; padding: 4px 5px 0; }
.g6 .tools { grid-template-columns: 44px 26px; }
.large { flex-direction: column; justify-content: flex-start; height: 69px; padding-top: 2px; }
.large span { height: 16px; margin-top: 8px; font-size: 11px; white-space: nowrap; color: #333; }
.large span.tight { font-size: 9px; }
.large .arr { margin-top: 3px; }
.large.two { position: relative; }
.large.two span { height: 26px; margin-top: 8px; font-size: 9px; line-height: 13px; }
.two .arr { position: absolute; right: 2px; bottom: 9px; margin: 0; }
.stack { display: grid; grid-template: repeat(3, 23px) / minmax(0, 1fr); align-items: center; }
.small { justify-content: flex-start; gap: 4px; padding-left: 3px; height: 23px; }
.small.flush { padding-left: 0; }
.row { display: flex; align-items: center; }
.pitch .small { width: 38px; }
.g4 .row { margin-right: -5px; }
.layer { padding-left: 6px; }
.layer > svg { margin-right: 7px; }
.layer > .i14:nth-of-type(4) { margin-right: 5px; }
.color > svg { margin: 0 3px 0 2px; }
.rule { width: 32px; border-top: 1px solid #111; }
.off { background: #eee; border-color: #a8bed8; }
.off .drop { opacity: .6; }
.slide input[type=range] { appearance: none; flex: 1; min-width: 0; height: 20px; background: none; }
.slide input[type=range]::-webkit-slider-runnable-track { height: 4px; background: #e7eaea; border: 1px solid #d6d6d6; }
.slide input[type=range]::-webkit-slider-thumb { appearance: none; width: 10px; height: 20px; margin-top: -9px; background: #0078d7; }
.num { width: 25px; height: 21px; border: 1px solid #8b93a0; padding: 0; text-align: center; font-size: 11px; background: #fff; }
.props { gap: 6px; padding-left: 2px; }

.canvas { flex: 1; min-height: 0; position: relative; background: #000; }
.ucs { position: absolute; left: 23.4%; bottom: 0; font: 15px "Liberation Sans", sans-serif; }
.pick { position: absolute; left: 48%; bottom: 1px; width: 7px; height: 7px; margin-left: -3px; border: 1px solid #fff; }

.sheets { display: flex; height: 16px; background: #f0f0f0; }
.sheet { display: grid; justify-content: start; width: 62px; height: 14px; margin-right: -3px; font: 12px/13px "Liberation Sans", "Noto Sans CJK JP", sans-serif; }
.sheet.on { z-index: 1; width: 56px; }
.sheet.on span { font-size: 11px; }
.sheet svg { grid-area: 1 / 1; width: 62px; height: 14px; fill: #c9c9c9; stroke: #333; }
.sheet.on svg { fill: #fff; }
.sheet span { grid-area: 1 / 1; z-index: 1; padding-left: 11px; text-align: left; }

.cmd { background: #fff; border-top: 2px solid #77797d; }
.cmdhead {
  display: flex; justify-content: space-between; align-items: center; height: 22px; padding: 0 5px 0 1px;
  background: #dfe4fd; border: 1px solid #a3a8b7; margin: 1px 1px 0;
}
.cmdhead h2 { font-size: 11px; font-weight: bold; }
.log, .prompt { font: 13px/18px "Liberation Sans", "Noto Sans CJK JP", sans-serif; }
.log {
  display: flex; justify-content: space-between; height: 22px; padding-left: 4px;
  border: 1px solid #878c99; font-feature-settings: "palt";
}
.log span { font-size: 12px; }
.scroll { width: 17px; background: #f0f0f0; display: flex; flex-direction: column; align-items: center; justify-content: space-around; }
.prompt { display: flex; height: 17px; padding-left: 5px; }
.prompt input { flex: 1; border: 0; outline: 0; height: 16px; background: none; }

/* bottom: status strip seen through the taskbar */
.bottom { display: grid; grid-template-columns: minmax(0, 1fr); position: relative; border-top: 3px solid #f0f0f0; height: 33px; background: #222; }
.status, .taskbar { grid-area: 1 / 1; height: 30px; display: flex; }
.status { padding: 0 0 8px 14px; align-items: center; gap: 8px; color: #080808; font-size: 11px; white-space: nowrap; }
.status .ver { flex: 0 0 460px; }
.status button { padding: 0 3px; height: 20px; border: 1px solid #1c1c1c; }
.status button.tight { font-size: 10px; }
.taskbar { padding-left: 1px; }
.taskbar > button { width: 36px; }
.taskbar > .app-btn { width: 37px; }
.taskbar > .live { background: #555; border-bottom: 2px solid #9bd4f5; }
.taskbar > .run { border-bottom: 2px solid #9bd4f5; width: 28px; margin-left: 5px; }
.dsicon { width: 22px; height: 22px; font: bold 6px "DejaVu Sans", sans-serif; fill: #fff; }
.tray { display: flex; margin-left: auto; padding-right: 94px; }
.tray > * { width: 24px; }
.hover { background: #3c3c3c; }
.tip {
  position: absolute; right: 25px; bottom: 1px; width: 244px; height: 20px; padding-left: 4px;
  background: #fff; border: 1px solid #767676; color: #575757; font-size: 11px; line-height: 18px; white-space: nowrap;
}
```
